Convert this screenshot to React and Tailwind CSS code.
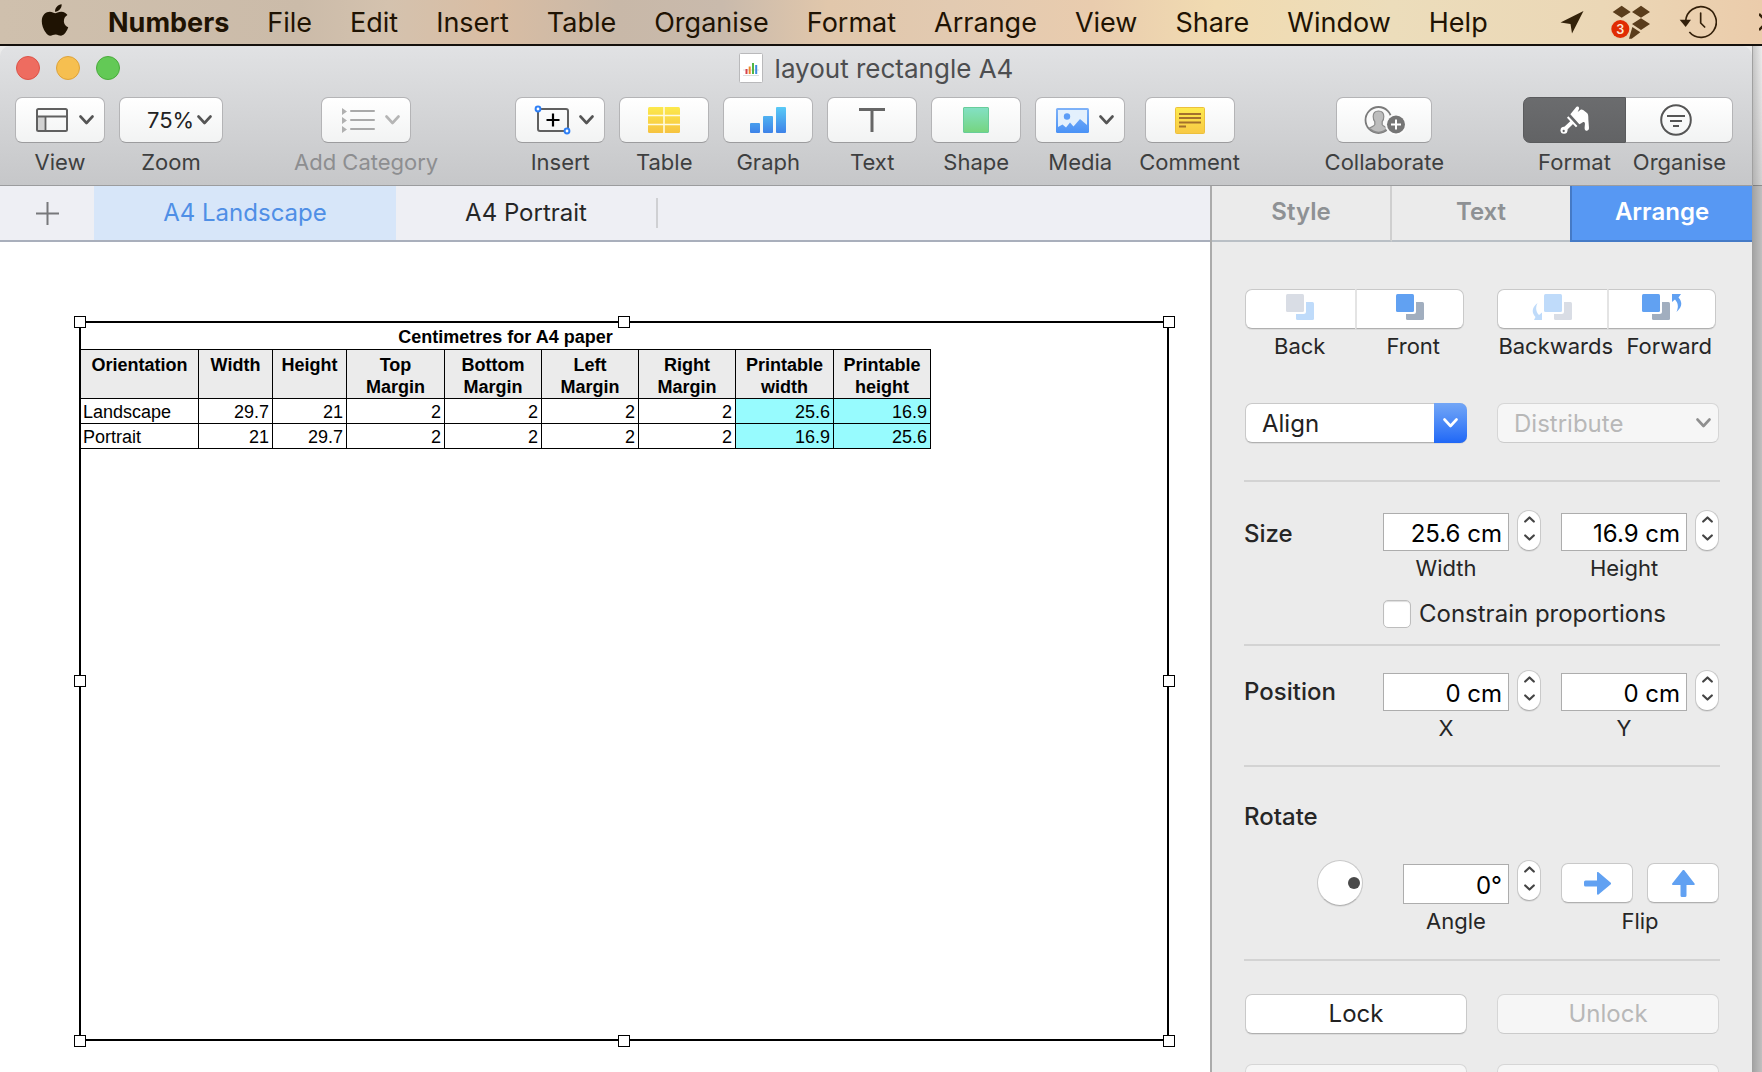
import { FaApple } from "react-icons/fa";

const menus = ["File", "Edit", "Insert", "Table", "Organise", "Format", "Arrange", "View", "Share", "Window", "Help"];

function Chevron({ className = "text-[#555]" }) {
  return (
    <svg width="15" height="10" viewBox="0 0 15 10" fill="none" className={className}>
      <path d="M1.5 1.5 7.5 8 13.5 1.5" stroke="currentColor" strokeWidth="2.6" strokeLinecap="round" strokeLinejoin="round" />
    </svg>
  );
}

/* ---------- menu bar ---------- */

function MenuBar() {
  return (
    <nav className="flex h-[46px] shrink-0 items-center overflow-hidden border-b-2 border-[#14100c] bg-[linear-gradient(90deg,#cfc0ad_0%,#cbbba9_17%,#d4c2ae_22%,#d9bda3_28%,#c8b8a8_35%,#c9baac_41%,#e1c7ab_47%,#e2cab1_54%,#e9ccae_62%,#f1dbb1_69%,#ecddbb_79%,#ebd7b6_91%,#ebccab_100%)] text-[27px] text-[#1f1303]">
      <button aria-label="Apple menu" className="ml-[37px] mr-[35px] flex w-9 shrink-0 justify-center pb-1">
        <FaApple size={36} />
      </button>
      <div className="flex items-center gap-[38px] pt-0.5">
        <button className="font-bold">Numbers</button>
        {menus.map((m) => (
          <button key={m}>{m}</button>
        ))}
      </div>
      <div className="ml-auto flex shrink-0 items-center">
        <button aria-label="Location" className="mr-[27px]">
          <svg width="24" height="23" viewBox="0 0 24 23" fill="#33220a">
            <path d="M23.500 0 12 22.500 10.500 13 .5 11.500z" />
          </svg>
        </button>
        <button aria-label="Dropbox, 3 notifications" className="mr-7">
          <svg width="40" height="34" viewBox="0 0 120 102">
            <g fill="#5a3d1c">
              <path d="M32 2 59 21 32 38 5 21zM90 2l27 19-27 17-27-17zM90 40l27 17-27 18-27-18z" />
              <path d="M64 66 88 82 62 101 54 101z" />
            </g>
            <circle cx="28" cy="72" r="31" fill="#e9d3b2" />
            <circle cx="28" cy="72" r="27" fill="#e02b03" />
            <text x="28" y="86" textAnchor="middle" fontFamily="Inter, sans-serif" fontSize="38" fontWeight="600" fill="#fbe9d8">3</text>
          </svg>
        </button>
        <button aria-label="Time Machine" className="mr-[42px]">
          <svg width="38" height="34" viewBox="0 0 114 102" fill="none" stroke="#33200a" strokeWidth="5">
            <path d="M20 48a46 46 0 1 1 11 33" />
            <path d="M2 44h34L20 66z" fill="#33200a" stroke="none" />
            <path d="M65 24v30l12 12" strokeWidth="5" strokeLinecap="round" strokeLinejoin="round" />
          </svg>
        </button>
        <button aria-label="More" className="w-[3px] overflow-hidden">
          <svg width="20" height="18" viewBox="0 0 20 18" fill="none" stroke="#33200a" strokeWidth="2.500">
            <path d="M0 1 8 9 0 17M9 1l8 8-8 8" />
          </svg>
        </button>
      </div>
    </nav>
  );
}

/* ---------- toolbar icons ---------- */

function ViewIcon() {
  return (
    <svg width="34" height="26" viewBox="-2 0 34 26" fill="none">
      <path d="M2 9h7v14H2z" fill="#d2d2d2" />
      <rect x="1" y="2" width="30" height="22" rx="1.500" stroke="#606060" strokeWidth="2" />
      <path d="M1 9.500h30M9.500 9.500V24" stroke="#606060" strokeWidth="1.800" />
    </svg>
  );
}

function CategoryIcon() {
  return (
    <svg width="36" height="28" viewBox="-2 0 36 28">
      <path d="M0 2v7l5-3.500zM0 11v7l5-3.500zM0 20v7l5-3.500z" fill="#b0b0b0" />
      <path d="M9 5h23M9 14h23M9 23h23" stroke="#a9a9a9" strokeWidth="2" strokeLinecap="round" />
    </svg>
  );
}

function InsertIcon() {
  return (
    <svg width="37" height="30" viewBox="0 0 37 30" fill="none">
      <rect x="4" y="4" width="30" height="22" rx="2" stroke="#606060" strokeWidth="2" />
      <path d="M19 8.500v13M12.500 15h13" stroke="#000" strokeWidth="2.200" />
      <circle cx="4" cy="4" r="2.400" fill="#fff" stroke="#2f80f6" strokeWidth="2" />
      <circle cx="33" cy="26" r="2.400" fill="#fff" stroke="#2f80f6" strokeWidth="2" />
    </svg>
  );
}

function TableIcon() {
  return (
    <svg width="32" height="26" viewBox="0 0 32 26">
      <defs>
        <linearGradient id="tbl" x1="0" y1="0" x2="0" y2="1">
          <stop offset="0" stopColor="#fce94c" />
          <stop offset="1" stopColor="#f6c33f" />
        </linearGradient>
      </defs>
      <rect width="32" height="26" rx="1.500" fill="url(#tbl)" />
      <path d="M16 0v26M0 8.500h32M0 17.500h32" stroke="#fffbe0" strokeWidth="1.600" />
    </svg>
  );
}

function GraphIcon() {
  return (
    <svg width="36" height="26" viewBox="0 0 36 26">
      <defs>
        <linearGradient id="grf" gradientUnits="userSpaceOnUse" x1="0" y1="0" x2="0" y2="26">
          <stop offset="0" stopColor="#59caf6" />
          <stop offset="1" stopColor="#3d82e8" />
        </linearGradient>
      </defs>
      <g fill="url(#grf)">
        <rect y="16" width="10" height="10" rx="1" />
        <rect x="13" y="9" width="10" height="17" rx="1" />
        <rect x="26" width="10" height="26" rx="1" />
      </g>
    </svg>
  );
}

function TextIcon() {
  return (
    <svg width="26" height="24" viewBox="0 0 26 24">
      <path d="M0 1.500h26M13 1.500V24" stroke="#666" strokeWidth="3" />
    </svg>
  );
}

function ShapeIcon() {
  return <span className="size-[26px] rounded-[1px] border border-[#68cd9a] bg-gradient-to-b from-[#83e0c3] to-[#76d580]" />;
}

function MediaIcon() {
  return (
    <svg width="35" height="25" viewBox="-2 0 35 25">
      <defs>
        <linearGradient id="med" x1="0" y1="0" x2="0" y2="1">
          <stop offset="0" stopColor="#7fb2f8" />
          <stop offset="1" stopColor="#4a92f6" />
        </linearGradient>
      </defs>
      <rect width="33" height="25" rx="1.500" fill="url(#med)" />
      <path d="M2 2h29v15l-7-6-6.500 7.500L14 14.500l-4 5-3.500-3L2 19z" fill="#e3f0fd" />
      <circle cx="11" cy="8.500" r="3.200" fill="#5d9df7" />
    </svg>
  );
}

function CommentIcon() {
  return (
    <svg width="30" height="27" viewBox="0 0 30 27">
      <defs>
        <linearGradient id="cmt" x1="0" y1="0" x2="0" y2="1">
          <stop offset="0" stopColor="#fdea4e" />
          <stop offset="1" stopColor="#f8c944" />
        </linearGradient>
      </defs>
      <rect x=".5" y=".5" width="29" height="26" rx="1" fill="url(#cmt)" stroke="#ecc03c" />
      <path d="M4 7h22M4 11h22M4 15.500h22M4 19.500h7" stroke="#a3702d" strokeWidth="2" />
    </svg>
  );
}

function CollaborateIcon() {
  return (
    <svg width="41" height="30" viewBox="0 0 41 30">
      <circle cx="14.500" cy="15" r="13" fill="#fafafa" stroke="#7b7b7b" strokeWidth="1.800" />
      <path d="M14.500 6c-3.500 0-5.300 2.200-5.300 5.500 0 2.500.7 4 1.600 5.200v3c-.4 1.600-3.300 2-5.300 3.300A12.300 12.300 0 0 0 14.500 27.300 12.300 12.300 0 0 0 23.500 23c-2-1.300-4.900-1.700-5.300-3.300v-3c.9-1.200 1.600-2.700 1.600-5.200C19.800 8.200 18 6 14.500 6z" fill="#bdbdbd" stroke="#8a8a8a" strokeWidth="1.200" />
      <circle cx="32" cy="19.500" r="10.800" fill="#fafafa" />
      <circle cx="32" cy="19.500" r="9" fill="#757575" />
      <path d="M32 14.500v10M27 19.500h10" stroke="#fff" strokeWidth="2" />
    </svg>
  );
}

function BrushIcon() {
  return (
    <svg width="30" height="28" viewBox="0 0 88 84" fill="#fff">
      <path d="M30 25 46 5C50-1 58 2 56 9L52 18 60 12C64 9 68 11 80 21 84 25 84 30 84 40L86 66C86 76 74 77 73 68 72 60 76 52 72 49 69 47 66 50 63 52L57 55z" />
      <path d="M22 33 49 62" stroke="#fff" strokeWidth="6" />
      <path d="M37 47 14 69" stroke="#fff" strokeWidth="12" />
      <circle cx="11" cy="73" r="10.500" />
      <circle cx="10" cy="75" r="3.500" fill="#666769" />
    </svg>
  );
}

function OrganiseIcon() {
  return (
    <svg width="32" height="32" viewBox="0 0 32 32" fill="none" stroke="#555">
      <circle cx="16" cy="16" r="14.800" strokeWidth="2" />
      <path d="M7 12h18M10 17h12M13 22h6" strokeWidth="2" />
    </svg>
  );
}

const face = "rounded-[7px] border border-[#b4b4b6] border-b-[#9c9c9e] bg-gradient-to-b from-white to-[#f2f3f3]";

function Tool({ label, icon, menu, disabled, wide }) {
  return (
    <button disabled={disabled} className="flex shrink-0 flex-col items-center">
      <span className={`flex h-[46px] items-center ${wide ? "w-24" : "w-[90px]"} ${menu ? "justify-between px-[18px] pr-[10px]" : "justify-center"} ${face}`}>
        {icon}
        {menu && <Chevron className={disabled ? "text-[#b5b5b5]" : "text-[#555]"} />}
      </span>
      <span className={`mt-[5px] leading-7 ${disabled ? "text-[#8d8e90]" : "text-[#3e3f40]"}`}>{label}</span>
    </button>
  );
}

function DocumentIcon() {
  return (
    <svg width="24" height="30" viewBox="0 0 24 30">
      <rect x=".5" y=".5" width="23" height="29" rx="1" fill="#fff" stroke="#b9b9bb" />
      <path d="M4 17h16M4 22.500h16" stroke="#ddd" />
      <path d="M7.500 16v5" stroke="#d8434b" strokeWidth="2" />
      <path d="M10.700 13.500V21" stroke="#ee8a2c" strokeWidth="2" />
      <path d="M14 10v11" stroke="#4fb545" strokeWidth="2" />
      <path d="M17.200 12v9" stroke="#3d8ce0" strokeWidth="2" />
    </svg>
  );
}

function WindowHeader() {
  return (
    <header className="h-[140px] shrink-0 overflow-hidden rounded-t-[10px] border-b border-[#9b9c9e] bg-gradient-to-b from-[#e1e2e4] to-[#c6c7c9]">
      <div className="grid h-11 grid-cols-[1fr_auto_1fr] items-center px-4">
        <div className="flex gap-4">
          <button aria-label="Close" className="size-6 rounded-full border border-[#dc5348] bg-[#ee6c60]" />
          <button aria-label="Minimise" className="size-6 rounded-full border border-[#dda23a] bg-[#f6bf50]" />
          <button aria-label="Zoom window" className="size-6 rounded-full border border-[#4aab3c] bg-[#63c956]" />
        </div>
        <h1 className="flex items-center gap-3 text-[26px] text-[#4d4e50]">
          <DocumentIcon />
          layout rectangle A4
        </h1>
      </div>
      <div className="flex items-start px-[15px] pt-[7px] text-[22px]">
        <div className="flex gap-[14px]">
          <Tool label="View" icon={<ViewIcon />} menu />
          <div className="flex w-[104px] flex-col items-center">
            <div className="relative w-full">
              <select id="zoom" defaultValue="75%" className={`h-[46px] w-full appearance-none pl-[27px] text-[#222] ${face}`}>
                <option>75%</option>
              </select>
              <span className="pointer-events-none absolute inset-y-0 right-[11px] flex items-center">
                <Chevron />
              </span>
            </div>
            <label htmlFor="zoom" className="mt-[5px] leading-7 text-[#3e3f40]">Zoom</label>
          </div>
        </div>
        <div className="ml-[71px]">
          <Tool label="Add Category" icon={<CategoryIcon />} menu disabled />
        </div>
        <div className="ml-[77px] flex gap-[14px]">
          <Tool label="Insert" icon={<InsertIcon />} menu />
          <Tool label="Table" icon={<TableIcon />} />
          <Tool label="Graph" icon={<GraphIcon />} />
          <Tool label="Text" icon={<TextIcon />} />
          <Tool label="Shape" icon={<ShapeIcon />} />
          <Tool label="Media" icon={<MediaIcon />} menu />
          <Tool label="Comment" icon={<CommentIcon />} />
        </div>
        <div className="ml-auto flex gap-[79px] pr-1">
          <Tool label="Collaborate" icon={<CollaborateIcon />} wide />
          <div className="grid w-[210px] grid-cols-[103px_1fr]">
            <button className="flex flex-col items-center">
              <span className="flex h-[46px] w-full items-center justify-center rounded-l-[7px] border border-[#5a5b5d] bg-gradient-to-b from-[#6b6c6e] to-[#626365]">
                <BrushIcon />
              </span>
              <span className="mt-[5px] leading-7 text-[#3e3f40]">Format</span>
            </button>
            <button className="flex flex-col items-center">
              <span className="flex h-[46px] w-full items-center justify-center rounded-r-[7px] border border-l-0 border-[#b4b4b6] border-b-[#9c9c9e] bg-gradient-to-b from-white to-[#f2f3f3] pr-1.5">
                <OrganiseIcon />
              </span>
              <span className="mt-[5px] leading-7 text-[#3e3f40]">Organise</span>
            </button>
          </div>
        </div>
      </div>
    </header>
  );
}

/* ---------- sheet ---------- */

const columns = [
  ["Orientation", "w-[118px]"],
  ["Width", "w-[74px]"],
  ["Height", "w-[74px]"],
  ["Top Margin", "w-[98px]"],
  ["Bottom Margin", "w-[97px]"],
  ["Left Margin", "w-[97px]"],
  ["Right Margin", "w-[97px]"],
  ["Printable width", "w-[98px]"],
  ["Printable height", "w-[97px]"],
];

const rows = [
  ["Landscape", "29.7", "21", "2", "2", "2", "2", "25.6", "16.9"],
  ["Portrait", "21", "29.7", "2", "2", "2", "2", "16.9", "25.6"],
];

const handles = [
  "-left-[7px] -top-[7px]",
  "left-1/2 -top-[7px] -translate-x-1/2",
  "-right-[8px] -top-[7px]",
  "-left-[7px] top-1/2 -translate-y-1/2",
  "-right-[8px] top-1/2 -translate-y-1/2",
  "-left-[7px] -bottom-[8px]",
  "left-1/2 -bottom-[8px] -translate-x-1/2",
  "-right-[8px] -bottom-[8px]",
];

function Sheet() {
  return (
    <main className="flex min-w-0 flex-1 flex-col bg-white">
      <div className="flex h-14 shrink-0 items-stretch border-b-2 border-[#a9afbc] bg-[#eeeff4] text-2xl">
        <button aria-label="Add sheet" className="flex w-[94px] items-center justify-center">
          <svg width="23" height="23" viewBox="0 0 23 23" stroke="#77787b" strokeWidth="2">
            <path d="M11.500 0v23M0 11.500h23" />
          </svg>
        </button>
        <button className="w-[302px] bg-[#d7e6f9] text-[#4f8fe6]">A4 Landscape</button>
        <button className="w-[260px] text-[#252627]">A4 Portrait</button>
        <span className="my-3 w-0.5 bg-[#cfd0d3]" />
      </div>
      <div className="flex flex-1 pb-[31px] pl-[79px] pr-[41px] pt-[79px]">
        <div className="relative flex-1 border-2 border-black">
          <table className="-ml-px w-[851px] table-fixed border-collapse font-['Liberation_Sans',Arial,sans-serif] text-lg text-black">
            <caption className="h-[26px] pt-0.5 text-lg leading-6 font-bold">Centimetres for A4 paper</caption>
            <thead>
              <tr>
                {columns.map(([name, width]) => (
                  <th key={name} scope="col" className={`border border-black bg-[#ebebeb] pt-1 align-top leading-[22px] ${width} ${name.includes(" ") ? "px-1" : ""}`}>
                    {name}
                  </th>
                ))}
              </tr>
            </thead>
            <tbody>
              {rows.map((row) => (
                <tr key={row[0]}>
                  {row.map((v, i) => (
                    <td key={i} className={`border border-black pl-[2px] pr-[3px] pt-0.5 leading-[22px] ${i === 0 ? "text-left" : "text-right"} ${i > 6 ? "bg-[#97fbfe]" : ""}`}>
                      {v}
                    </td>
                  ))}
                </tr>
              ))}
            </tbody>
          </table>
          {handles.map((h) => (
            <span key={h} className={`absolute size-3 border border-black bg-white ${h}`} />
          ))}
        </div>
      </div>
    </main>
  );
}

/* ---------- inspector ---------- */

function Stack({ front, back, arrow }) {
  return (
    <svg width={arrow ? 40 : 28} height="26" viewBox={arrow === "left" ? "-12 0 40 26" : arrow === "right" ? "0 0 40 26" : "0 0 28 26"}>
      <rect x="10" y="8" width="18" height="18" rx="1.500" fill={back} />
      <rect x="-1" y="-1" width="21" height="21" rx="2.500" fill="#fff" />
      <rect width="18" height="18" rx="1.500" fill={front} />
      {arrow === "left" && <path d="M-6.500 9C-12.500 14-12.500 19-8.500 23L-10 26H-2V18.500L-5 21C-8.500 17-8.500 13-6.500 9z" fill={front} />}
      {arrow === "right" && <path d="M34.500 18C40.500 13 40.500 8 36.500 3.500L39 0H30V8L33 5.500C36.500 9.500 36.500 13 34.500 18z" fill={front} />}
    </svg>
  );
}

const soft = "border border-[#c9c9c9] border-b-[#b0b0b0] bg-white shadow-[0_1px_0_#dcdcdc]";
const softOff = "border border-[#d6d6d6] border-b-[#cbcbcb] bg-[#f6f6f6]";

function OrderPair({ items }) {
  return (
    <div className="mr-[3px] grid grid-cols-2">
      {items.map((it, i) => (
        <button key={it.label} disabled={it.disabled} className="flex flex-col items-center text-[22px] text-[#262626]">
          <span className={`flex h-10 w-full items-center justify-center pb-1 ${soft} ${i ? "rounded-r-[7px] border-l-2 border-l-[#e4e4e4]" : "rounded-l-[7px] border-r-0"}`}>
            {it.icon}
          </span>
          <span className={`mt-[3px] leading-7 ${it.shift || ""}`}>{it.label}</span>
        </button>
      ))}
    </div>
  );
}

function Stepper({ name }) {
  return (
    <div className={`flex h-[41px] w-6 flex-col rounded-xl text-[#444] ${soft}`}>
      <button aria-label={`Increase ${name}`} className="flex flex-1 items-center justify-center">
        <svg width="11" height="7" viewBox="0 0 11 7" fill="none" stroke="currentColor" strokeWidth="2.200" strokeLinecap="round" strokeLinejoin="round">
          <path d="M1.200 5.500 5.500 1.500 9.800 5.500" />
        </svg>
      </button>
      <button aria-label={`Decrease ${name}`} className="flex flex-1 items-center justify-center pb-1">
        <svg width="11" height="7" viewBox="0 0 11 7" fill="none" stroke="currentColor" strokeWidth="2.200" strokeLinecap="round" strokeLinejoin="round">
          <path d="M1.200 1.500 5.500 5.500 9.800 1.500" />
        </svg>
      </button>
    </div>
  );
}

function Field({ id, label, value }) {
  return (
    <div>
      <div className="flex items-end gap-2">
        <div className="min-w-0 flex-1">
          <input id={id} defaultValue={value} className="block h-[38px] w-full border border-[#adadad] bg-white px-[6px] pt-0.5 text-right text-2xl text-black" />
        </div>
        <Stepper name={label} />
      </div>
      <label htmlFor={id} className="mr-8 mt-[3px] block text-center text-[22px] leading-7 text-[#262626]">{label}</label>
    </div>
  );
}

const heading = "text-2xl leading-7 font-medium text-[#262626]";
const wideButton = "h-10 rounded-[7px] text-2xl";
const fieldGrid = "grid grid-cols-[1fr_158px_158px] gap-x-5 pr-px";

function Inspector() {
  return (
    <aside className="flex w-[542px] shrink-0 flex-col overflow-hidden border-l-2 border-[#ababab] bg-[#ebebeb]">
      <div className="grid h-14 shrink-0 grid-cols-[180px_178px_1fr] text-2xl font-semibold">
        <button className="border-b-2 border-r-2 border-b-[#b9bfc5] border-r-[#cfcfcf] pb-0.5 text-[#8e9194]">Style</button>
        <button className="border-b-2 border-b-[#b9bfc5] pb-0.5 text-[#8e9194]">Text</button>
        <button className="border-b-2 border-l-2 border-b-[#457ac6] border-l-[#457ac6] bg-[#5798f3] pb-0.5 text-white">Arrange</button>
      </div>
      <div className="px-8">
        <section className="border-b-2 border-[#d3d3d3] px-px pb-[37px] pt-[47px]">
          <div className="grid grid-cols-2 gap-[30px]">
            <OrderPair
              items={[
                { label: "Back", icon: <Stack front="#d9dde5" back="#bfdbfa" />, disabled: true },
                { label: "Front", icon: <Stack front="#61a1f2" back="#a1aebf" />, shift: "pl-2" },
              ]}
            />
            <OrderPair
              items={[
                { label: "Backwards", icon: <Stack front="#bfdbfa" back="#d9dde5" arrow="left" />, disabled: true, shift: "pl-2" },
                { label: "Forward", icon: <Stack front="#61a1f2" back="#a1aebf" arrow="right" />, shift: "pl-4" },
              ]}
            />
          </div>
          <div className="mt-[43px] grid grid-cols-2 gap-[30px]">
            <div className="relative">
              <select aria-label="Align" className={`w-full appearance-none pl-4 pt-0.5 text-[#222] ${wideButton} ${soft}`}>
                <option>Align</option>
              </select>
              <span className="pointer-events-none absolute inset-y-0 right-0 flex w-[33px] items-center justify-center rounded-r-[7px] bg-gradient-to-b from-[#73a6f6] to-[#1f67f6]">
                <Chevron className="text-white" />
              </span>
            </div>
            <div className="relative">
              <select aria-label="Distribute" disabled className={`w-full appearance-none pl-4 pt-0.5 text-[#b8b8b8] opacity-100 ${wideButton} ${softOff}`}>
                <option>Distribute</option>
              </select>
              <span className="pointer-events-none absolute inset-y-0 right-2 flex items-center">
                <Chevron className="text-[#8f8f8f]" />
              </span>
            </div>
          </div>
        </section>

        <section className="border-b-2 border-[#d3d3d3] pb-4 pt-7">
          <div className={fieldGrid}>
            <h2 className={`pt-[10px] ${heading}`}>Size</h2>
            <Field id="width" label="Width" value="25.6 cm" />
            <Field id="height" label="Height" value="16.9 cm" />
            <label className="col-span-2 col-start-2 mt-[18px] flex items-center gap-2 text-2xl leading-7 text-[#262626]">
              <input type="checkbox" className="size-7 appearance-none rounded-[5px] border border-[#bdbdbd] bg-white shadow-[inset_0_1px_1px_#ddd]" />
              Constrain proportions
            </label>
          </div>
        </section>

        <section className="border-b-2 border-[#d3d3d3] pb-[23px] pt-6">
          <div className={fieldGrid}>
            <h2 className={`pt-2 ${heading}`}>Position</h2>
            <Field id="x" label="X" value="0 cm" />
            <Field id="y" label="Y" value="0 cm" />
          </div>
        </section>

        <section className="border-b-2 border-[#d3d3d3] pb-6 pt-9">
          <h2 className={heading}>Rotate</h2>
          <div className="mt-[29px] grid grid-cols-[1fr_138px_158px] gap-x-5 pr-px">
            <div className="flex justify-end pr-5">
              <button aria-label="Rotation dial" className={`flex size-[46px] items-center justify-end rounded-full pr-[2px] ${soft}`}>
                <span className="size-3 rounded-full bg-[#4a4a4a]" />
              </button>
            </div>
            <div>
              <div className="flex items-start gap-2">
                <div className="min-w-0 flex-1 pt-1">
                  <input id="angle" defaultValue="0°" className="block h-10 w-full border border-[#adadad] bg-white px-[6px] pt-0.5 text-right text-2xl text-black" />
                </div>
                <Stepper name="Angle" />
              </div>
              <label htmlFor="angle" className="mr-8 mt-[3px] block text-center text-[22px] leading-7 text-[#262626]">Angle</label>
            </div>
            <div className="pt-[3px]">
              <div className="grid grid-cols-2 gap-[14px]">
                <button aria-label="Flip horizontally" className={`flex h-10 items-center justify-center rounded-[7px] ${soft}`}>
                  <svg width="27" height="23" viewBox="0 0 27 23" fill="#61a1f2">
                    <path d="M1.500 8.500H13V1a1 1 0 0 1 1.500-.800L26.500 10.500a1.200 1.200 0 0 1 0 2L14.500 22.500A1 1 0 0 1 13 22V14.500H1.500A1.500 1.500 0 0 1 0 13V10a1.500 1.500 0 0 1 1.500-1.500z" />
                  </svg>
                </button>
                <button aria-label="Flip vertically" className={`flex h-10 items-center justify-center rounded-[7px] ${soft}`}>
                  <svg width="23" height="27" viewBox="0 0 23 27" fill="#61a1f2">
                    <path d="M8.500 25.500V15H1a1 1 0 0 1-.800-1.500L10.500.5a1.200 1.200 0 0 1 2 0L22.500 13.500A1 1 0 0 1 22 15H14.500V25.500A1.500 1.500 0 0 1 13 27H10a1.500 1.500 0 0 1-1.500-1.500z" />
                  </svg>
                </button>
              </div>
              <p className="mt-1 text-center text-[22px] leading-7 text-[#262626]">Flip</p>
            </div>
          </div>
        </section>

        <section className="grid grid-cols-2 gap-x-[30px] gap-y-[30px] px-px pt-[33px]">
          <button className={`text-[#222] ${wideButton} ${soft}`}>Lock</button>
          <button disabled className={`text-[#b8b8b8] ${wideButton} ${softOff}`}>Unlock</button>
          <button disabled aria-label="Group" className={`${wideButton} ${softOff}`} />
          <button disabled aria-label="Ungroup" className={`${wideButton} ${softOff}`} />
        </section>
      </div>
    </aside>
  );
}

export default function App() {
  return (
    <div className="flex h-screen flex-col overflow-hidden bg-[#14100c] font-[Inter,sans-serif]">
      <MenuBar />
      <div className="flex min-h-0 flex-1 bg-[linear-gradient(180deg,#ececec_0,#d2d2d2_139px,#8f8f8f_139px,#8f8f8f_140px,#c0c0c0_140px)]">
        <div className="flex min-w-0 flex-1 flex-col border-r border-[#a0a0a0]">
          <WindowHeader />
          <div className="flex min-h-0 flex-1">
            <Sheet />
            <Inspector />
          </div>
        </div>
        <div className="w-[9px] shrink-0 bg-gradient-to-r from-black/15 to-transparent" />
      </div>
    </div>
  );
}
